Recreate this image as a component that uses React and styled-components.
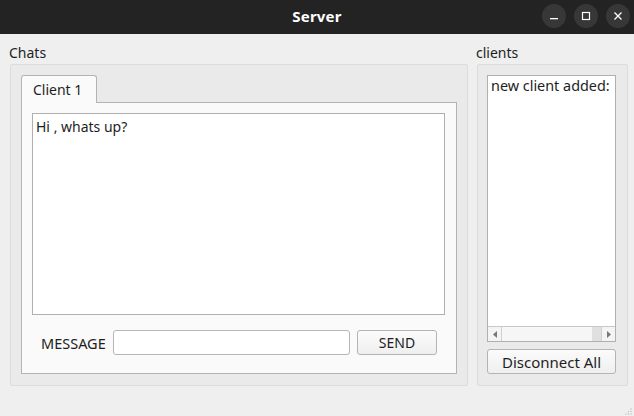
import React from "react";
import styled, { createGlobalStyle } from "styled-components";

const Global = createGlobalStyle`
  html, body { margin: 0; padding: 0; background: #efefef; }
  body { font-family: "Noto Sans", "DejaVu Sans", sans-serif; font-size: 14px; color: #1e1e1e; }
  * { box-sizing: border-box; }
`;

const Window = styled.div`
  width: 634px;
  height: 416px;
  display: flex;
  flex-direction: column;
  background: #efefef;
  position: relative;
  overflow: hidden;
`;

const TitleBar = styled.div`
  height: 34px;
  background: #232323;
  display: flex;
  align-items: center;
  justify-content: center;
  position: relative;
  flex-shrink: 0;
`;

const Title = styled.div`
  color: #ffffff;
  font-family: "Noto Sans", sans-serif;
  font-weight: 700;
  font-size: 15px;
  letter-spacing: 0.2px;
  margin-top: -2px;
`;

const WinButtons = styled.div`
  position: absolute;
  right: 4px;
  top: 4px;
  display: flex;
  gap: 8px;
`;

const WinButton = styled.div`
  width: 24px;
  height: 24px;
  border-radius: 50%;
  background: #373737;
  display: flex;
  align-items: center;
  justify-content: center;
`;

const Content = styled.div`
  flex: 1;
  display: flex;
  padding: 7px 6px 30px 9px;
  gap: 8px;
`;

const Column = styled.div`
  display: flex;
  flex-direction: column;
  width: ${(p) => p.$w}px;
`;

const Label = styled.div`
  height: 23px;
  line-height: 24px;
`;

const Group = styled.div`
  flex: 1;
  margin-left: 1px;
  border: 1px solid #dcdcdc;
  border-radius: 2px;
  background: #eaeaea;
  display: flex;
  flex-direction: column;
  padding: ${(p) => p.$pad};
`;

const TabBar = styled.div`
  display: flex;
  height: 27px;
  position: relative;
  z-index: 1;
`;

const Tab = styled.div`
  width: 76px;
  height: 28px;
  border: 1px solid #b4b4b4;
  border-bottom: none;
  border-radius: 3px 3px 0 0;
  background: #fafafa;
  padding-left: 11px;
  line-height: 27px;
`;

const Pane = styled.div`
  flex: 1;
  border: 1px solid #b4b4b4;
  background: #fafafa;
  display: flex;
  flex-direction: column;
  padding: 10px 11px 18px 10px;
`;

const TextArea = styled.div`
  height: 202px;
  background: #ffffff;
  border: 1px solid #b0b0b0;
  padding: 4px 3px;
  line-height: 18px;
`;

const MessageRow = styled.div`
  margin-top: 15px;
  display: flex;
  align-items: center;
  padding: 0 8px 0 9px;
  gap: 7px;
`;

const MessageLabel = styled.div`
  font-size: 14.5px;
  width: 65px;
  white-space: nowrap;
`;

const Input = styled.div`
  width: 237px;
  height: 25px;
  background: #ffffff;
  border: 1px solid #b6b6b6;
  border-radius: 3px;
`;

const Button = styled.div`
  width: ${(p) => p.$w}px;
  height: 25px;
  border: 1px solid #b4b4b4;
  border-radius: 3px;
  background: linear-gradient(#fbfbfb, #efefef);
  display: flex;
  align-items: center;
  justify-content: center;
  font-size: ${(p) => p.$fs || 14}px;
  white-space: nowrap;
`;

const ListBox = styled.div`
  flex: 1;
  background: #ffffff;
  border: 1px solid #b0b0b0;
  display: flex;
  flex-direction: column;
`;

const ListText = styled.div`
  flex: 1;
  padding: 1px 3px;
  line-height: 18px;
  font-size: 14.4px;
  white-space: nowrap;
  overflow: hidden;
`;

const ScrollBar = styled.div`
  height: 15px;
  border-top: 1px solid #c8c8c8;
  background: #f4f4f4;
  display: flex;
`;

const Arrow = styled.div`
  width: 14px;
  display: flex;
  align-items: center;
  justify-content: center;
  border-${(p) => p.$side}: 1px solid #d0d0d0;
`;

const Track = styled.div`
  flex: 1;
  background: #f6f6f6;
  display: flex;
  justify-content: flex-end;
`;

const TrackEnd = styled.div`
  width: 9px;
  background: #e0e0e0;
`;

const Spacer = styled.div`
  height: 7px;
`;

const Grip = styled.svg`
  position: absolute;
  right: 1px;
  bottom: 1px;
`;

export default function App() {
  return (
    <Window>
      <Global />
      <TitleBar>
        <Title>Server</Title>
        <WinButtons>
          <WinButton>
            <svg width="10" height="10" viewBox="0 0 10 10"><rect x="1" y="7" width="8" height="1.3" fill="#fff" /></svg>
          </WinButton>
          <WinButton>
            <svg width="10" height="10" viewBox="0 0 10 10"><rect x="1.5" y="1.5" width="7" height="7" fill="none" stroke="#fff" strokeWidth="1.2" /></svg>
          </WinButton>
          <WinButton>
            <svg width="10" height="10" viewBox="0 0 10 10"><path d="M1.5 1.5 L8.5 8.5 M8.5 1.5 L1.5 8.5" stroke="#fff" strokeWidth="1.3" /></svg>
          </WinButton>
        </WinButtons>
      </TitleBar>
      <Content>
        <Column $w={460}>
          <Label>Chats</Label>
          <Group $pad="10px 10px 11px 10px">
            <TabBar>
              <Tab>Client 1</Tab>
            </TabBar>
            <Pane>
              <TextArea>Hi , whats up?</TextArea>
              <MessageRow>
                <MessageLabel>MESSAGE</MessageLabel>
                <Input />
                <Button $w={80}>SEND</Button>
              </MessageRow>
            </Pane>
          </Group>
        </Column>
        <Column $w={152}>
          <Label>clients</Label>
          <Group $pad="10px 11px 11px 9px">
            <ListBox>
              <ListText>new client added:</ListText>
              <ScrollBar>
                <Arrow $side="right">
                  <svg width="4" height="7" viewBox="0 0 4 7"><path d="M4 0 L0 3.5 L4 7 Z" fill="#777" /></svg>
                </Arrow>
                <Track><TrackEnd /></Track>
                <Arrow $side="left">
                  <svg width="4" height="7" viewBox="0 0 4 7"><path d="M0 0 L4 3.5 L0 7 Z" fill="#777" /></svg>
                </Arrow>
              </ScrollBar>
            </ListBox>
            <Spacer />
            <Button $w={129} $fs={15}>Disconnect All</Button>
          </Group>
        </Column>
      </Content>
      <Grip width="8" height="8" viewBox="0 0 8 8">
        <circle cx="6" cy="2" r="0.7" fill="#bbb" />
        <circle cx="3.5" cy="4.5" r="0.7" fill="#bbb" />
        <circle cx="6" cy="4.5" r="0.7" fill="#bbb" />
        <circle cx="1" cy="7" r="0.7" fill="#bbb" />
        <circle cx="3.5" cy="7" r="0.7" fill="#bbb" />
        <circle cx="6" cy="7" r="0.7" fill="#bbb" />
      </Grip>
    </Window>
  );
}
